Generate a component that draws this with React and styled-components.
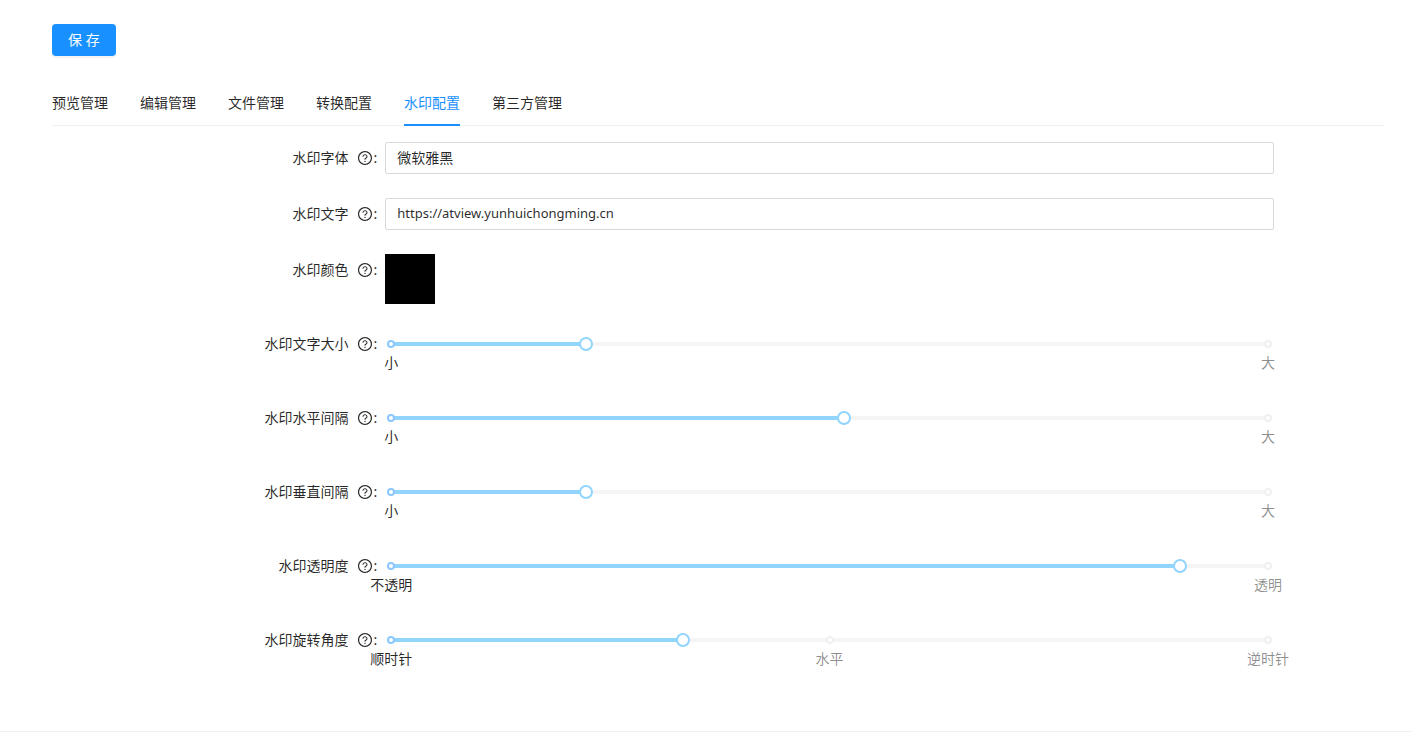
import React, { useState } from 'react';
import styled, { createGlobalStyle } from 'styled-components';

const GlobalStyle = createGlobalStyle`
  * {
    box-sizing: border-box;
  }

  body {
    margin: 0;
    background: #fff;
    color: rgba(0, 0, 0, 0.85);
    font: 14px/22px 'Noto Sans', 'Noto Sans CJK SC', sans-serif;
  }

  button,
  input {
    font: inherit;
    color: inherit;
  }
`;

const Card = styled.main`
  padding: 24px 26px 33px 52px;
  border-bottom: 1px solid #f0f0f0;
  box-shadow: 0 1px 4px rgba(0, 0, 0, 0.08);
`;

const SaveButton = styled.button`
  display: block;
  height: 32px;
  margin-bottom: 24px;
  padding: 0 16px;
  border: 0;
  border-radius: 4px;
  background: #1890ff;
  box-shadow: 0 2px 0 rgba(0, 0, 0, 0.045);
  color: #fff;
  cursor: pointer;
`;

const TabList = styled.div`
  display: flex;
  gap: 32px;
  margin-bottom: 16px;
  box-shadow: inset 0 -1px #f0f0f0;
`;

const Tab = styled.button`
  height: 46px;
  padding: 2px 0 0;
  border: 0;
  border-bottom: 2px solid ${({ $active }) => ($active ? '#1890ff' : 'transparent')};
  background: none;
  color: ${({ $active }) => ($active ? '#1890ff' : 'inherit')};
  cursor: pointer;
`;

const Row = styled.div`
  display: grid;
  grid-template-columns: 6fr 16fr 2fr;
  margin-bottom: 24px;
`;

const Label = styled.label`
  display: flex;
  align-items: center;
  justify-content: flex-end;
  height: 32px;
  padding-right: 8px;
`;

const HelpIcon = styled.svg`
  width: 14px;
  height: 14px;
  margin: 0 1px 0 10px;
`;

const TextInput = styled.input`
  width: 100%;
  height: 32px;
  padding: 0 11px 2px;
  border: 1px solid #d9d9d9;
  border-radius: 2px;
  background: #fff;
  font-size: ${({ $latin }) => ($latin ? '13px' : '14px')};
  outline: none;

  &:focus {
    border-color: #40a9ff;
  }
`;

const ColorInput = styled.input`
  display: block;
  width: 50px;
  height: 50px;
  padding: 0;
  border: 0;
  background: none;
  cursor: pointer;

  &::-webkit-color-swatch-wrapper {
    padding: 0;
  }

  &::-webkit-color-swatch {
    border: 0;
  }
`;

const SliderBox = styled.div`
  position: relative;
  height: 12px;
  margin: 10px 6px 28px;
`;

const Rail = styled.div`
  position: absolute;
  top: 4px;
  width: 100%;
  height: 4px;
  border-radius: 2px;
  background: #f5f5f5;
`;

const Fill = styled.div`
  height: 100%;
  border-radius: 2px;
  background: #91d5ff;
`;

const Dot = styled.span`
  position: absolute;
  top: 2px;
  width: 8px;
  height: 8px;
  border: 2px solid ${({ $active }) => ($active ? '#8cc8ff' : '#f0f0f0')};
  border-radius: 50%;
  background: #fff;
  transform: translateX(-50%);
`;

const Mark = styled.span`
  position: absolute;
  top: 14px;
  color: ${({ $active }) => ($active ? 'rgba(0, 0, 0, 0.85)' : 'rgba(0, 0, 0, 0.45)')};
  white-space: nowrap;
  transform: translateX(-50%);
`;

const Range = styled.input`
  position: absolute;
  top: -1px;
  left: -7px;
  width: calc(100% + 14px);
  height: 14px;
  margin: 0;
  appearance: none;
  background: none;
  outline: none;
  cursor: pointer;

  &::-webkit-slider-thumb {
    width: 14px;
    height: 14px;
    border: 2px solid #91d5ff;
    border-radius: 50%;
    appearance: none;
    background: #fff;
  }
`;

const tabs = ['预览管理', '编辑管理', '文件管理', '转换配置', '水印配置', '第三方管理'];

const sliders = [
  { id: 'size', label: '水印文字大小', min: 10, max: 100, value: 30, marks: { 10: '小', 100: '大' } },
  { id: 'gapX', label: '水印水平间隔', min: 10, max: 500, value: 263, marks: { 10: '小', 500: '大' } },
  { id: 'gapY', label: '水印垂直间隔', min: 10, max: 100, value: 30, marks: { 10: '小', 100: '大' } },
  { id: 'opacity', label: '水印透明度', min: 0, max: 100, value: 90, marks: { 0: '不透明', 100: '透明' } },
  { id: 'angle', label: '水印旋转角度', min: 0, max: 180, value: 60, marks: { 0: '顺时针', 90: '水平', 180: '逆时针' } },
];

const Help = () => (
  <HelpIcon viewBox="64 64 896 896" fill="currentColor" aria-hidden="true">
    <path d="M512 64C264.600 64 64 264.600 64 512s200.600 448 448 448 448-200.600 448-448S759.400 64 512 64zm0 820c-205.400 0-372-166.600-372-372s166.600-372 372-372 372 166.600 372 372-166.600 372-372 372z" />
    <path d="M623.600 316.700C593.600 290.400 554 276 512 276s-81.600 14.500-111.600 40.700C369.200 344 352 380.700 352 420v7.600c0 4.400 3.600 8 8 8h48c4.400 0 8-3.600 8-8V420c0-44.100 43.100-80 96-80s96 35.900 96 80c0 31.100-22 59.600-56.100 72.700-21.200 8.100-39.200 22.300-52.100 40.900-13.100 19-19.900 41.800-19.900 64.900V620c0 4.400 3.600 8 8 8h48c4.400 0 8-3.600 8-8v-22.700a48.300 48.300 0 0 1 30.900-44.800c59-22.700 97.100-74.700 97.100-132.500.100-39.300-17.100-76-48.300-103.300zM472 732a40 40 0 1 0 80 0 40 40 0 1 0-80 0z" />
  </HelpIcon>
);

const Field = ({ id, label, children }) => (
  <Row>
    <Label htmlFor={id}>
      {label}
      <Help />
      :
    </Label>
    <div>{children}</div>
  </Row>
);

const Slider = ({ id, min, max, value: initial, marks }) => {
  const [value, setValue] = useState(initial);
  const percent = v => `${((v - min) / (max - min)) * 100}%`;
  const points = Object.keys(marks).map(Number);

  return (
    <SliderBox>
      <Rail>
        <Fill style={{ width: percent(value) }} />
      </Rail>
      {points.map(point => (
        <Dot key={point} $active={point <= value} style={{ left: percent(point) }} />
      ))}
      {points.map(point => (
        <Mark key={point} $active={point <= value} style={{ left: percent(point) }}>
          {marks[point]}
        </Mark>
      ))}
      <Range
        type="range"
        id={id}
        min={min}
        max={max}
        value={value}
        onChange={e => setValue(Number(e.target.value))}
      />
    </SliderBox>
  );
};

const App = () => {
  const [active, setActive] = useState('水印配置');

  return (
    <>
      <GlobalStyle />
      <Card>
        <SaveButton type="button">保 存</SaveButton>
        <TabList role="tablist">
          {tabs.map(tab => (
            <Tab
              key={tab}
              type="button"
              role="tab"
              aria-selected={tab === active}
              $active={tab === active}
              onClick={() => setActive(tab)}
            >
              {tab}
            </Tab>
          ))}
        </TabList>
        <form>
          <Field id="font" label="水印字体">
            <TextInput type="text" id="font" defaultValue="微软雅黑" />
          </Field>
          <Field id="text" label="水印文字">
            <TextInput $latin type="text" id="text" defaultValue="https://atview.yunhuichongming.cn" />
          </Field>
          <Field id="color" label="水印颜色">
            <ColorInput type="color" id="color" defaultValue="#000000" />
          </Field>
          {sliders.map(slider => (
            <Field key={slider.id} id={slider.id} label={slider.label}>
              <Slider {...slider} />
            </Field>
          ))}
        </form>
      </Card>
    </>
  );
};

export default App;
